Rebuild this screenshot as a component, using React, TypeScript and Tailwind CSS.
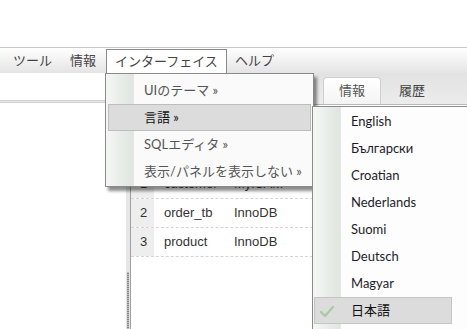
const menuItems = ['UIのテーマ »', '言語 »', 'SQLエディタ »', '表示/パネルを表示しない »']
const languages = ['English', 'Български', 'Croatian', 'Nederlands', 'Suomi', 'Deutsch', 'Magyar', '日本語']
const tables = [
  ['1', 'customer', 'MyISAM'],
  ['2', 'order_tb', 'InnoDB'],
  ['3', 'product', 'InnoDB'],
]

export default function App() {
  return (
    <div className="relative w-[467px] h-[329px] overflow-hidden bg-white font-['Lato','Noto_Sans_CJK_JP',sans-serif] text-[13px]">
      <div className="h-[47px]" />
      <div className="h-px bg-[#c8c8c8]" />

      {/* menubar */}
      <div className="h-[25px] flex items-stretch pl-[5px] bg-linear-to-b from-white to-[#e4e4e4] text-[#444]">
        <div className="px-2 flex items-center">ツール</div>
        <div className="px-2 ml-[2px] flex items-center">情報</div>
        <div className="px-2 ml-[2px] mt-px flex items-center bg-white border border-b-0 border-[#8a8a8a]">インターフェイス</div>
        <div className="px-2 flex items-center">ヘルプ</div>
      </div>

      {/* body */}
      <div className="flex h-[256px]">
        <div className="w-[126px] flex flex-col">
          <div className="h-[27px]" />
          <div className="h-[3px] bg-[#e6e6e6] border-y border-[#cfcfcf]" />
        </div>
        <div className="w-[5px] flex flex-col justify-end bg-[#e6e6e6] border-r border-[#a0a0a0]">
          <div className="h-[57px] mx-px bg-[repeating-linear-gradient(to_bottom,#bbb_0,#bbb_1px,#888_1px,#888_2px)]" />
        </div>
        <div className="flex-1 flex flex-col">
          <div className="h-[32px] flex items-end pl-[192px] bg-linear-to-b from-[#e2e2e2] to-[#ececec] border-b border-[#b8b8b8]">
            <div className="w-[58px] h-[27px] flex items-center justify-center rounded-t-[4px] border border-b-0 border-[#cfcfcf] bg-linear-to-b from-white to-[#f4f4f4] text-[#555]">情報</div>
            <div className="w-[58px] h-[27px] ml-[2px] flex items-center justify-center text-[#444]">履歴</div>
          </div>
          <div className="h-[65px]" />
          <div className="font-['Liberation_Sans',Arial,sans-serif] text-[13px] text-[#333]">
            {tables.map(([n, name, engine]) => (
              <div key={n} className="h-[29px] flex items-center border-b border-dashed border-[#d4d4d4]">
                <div className="w-[23px] h-full flex items-center justify-center bg-[#eeeeee] pl-[2px]">{n}</div>
                <div className="w-[80px] pl-[10px]">{name}</div>
                <div>{engine}</div>
              </div>
            ))}
          </div>
        </div>
      </div>

      {/* interface menu */}
      <div className="absolute left-[105px] top-[73px] w-[209px] h-[114px] pt-[3px] border border-[#8a8a8a] bg-[linear-gradient(to_right,#f5f7f5_0,#dfe5df_27px,#e6e6e6_27px,#e6e6e6_28px,#fafafa_28px)] shadow-[3px_4px_3px_rgba(0,0,0,0.45)]">
        {menuItems.map((item, i) => (
          <div
            key={item}
            className={
              i === 1
                ? 'h-[27px] mx-[2px] pl-[35px] flex items-center border border-[#bdbdbd] bg-[#dcdcdc] text-[#111]'
                : 'h-[27px] mx-[2px] pl-[35px] flex items-center border border-transparent text-[#555]'
            }
          >
            {item}
          </div>
        ))}
      </div>

      {/* language submenu */}
      <div className="absolute left-[312px] top-[106px] w-[170px] h-[240px] pt-[1px] border border-[#8a8a8a] bg-[linear-gradient(to_right,#f5f7f5_0,#dfe5df_27px,#e6e6e6_27px,#e6e6e6_28px,#fdfdfd_28px)]">
        {languages.map((lang, i) => (
          <div
            key={lang}
            className={
              i === languages.length - 1
                ? 'relative h-[27px] ml-px w-[138px] pl-[36px] flex items-center border border-[#c4c4c4] bg-[#dcdcdc] text-[#111]'
                : 'h-[27px] ml-px w-[138px] pl-[36px] flex items-center border border-transparent text-[#1c1c2a]'
            }
          >
            {i === languages.length - 1 && (
              <svg className="absolute left-[5px] top-[8px]" width="14" height="11" viewBox="0 0 14 11">
                <path d="M1 6 L5 10 L13 1" fill="none" stroke="#a9c9a0" strokeWidth="2.2" strokeLinecap="round" strokeLinejoin="round" />
              </svg>
            )}
            {lang}
          </div>
        ))}
      </div>
    </div>
  )
}
